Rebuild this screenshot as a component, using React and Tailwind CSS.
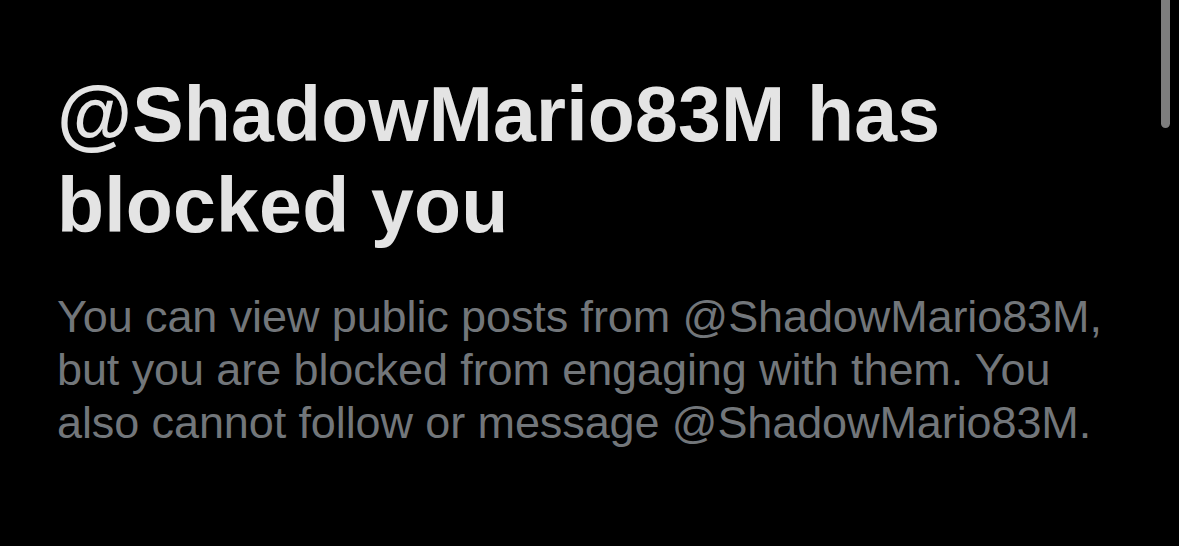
export default function App() {
  return (
    <main
      className="relative h-[546px] w-full overflow-hidden bg-black"
      style={{ fontFamily: '"Liberation Sans", Arial, sans-serif' }}
    >
      {/* scroll indicator */}
      <div className="absolute right-[9px] top-[-6px] h-[134px] w-[9px] rounded-full bg-[#7d7d7d]" />

      <div className="flex flex-col whitespace-nowrap pl-[57px] pt-[69px]">
        <h1 className="text-[77px] font-bold leading-[91px] tracking-[0.2px] text-[#e4e4e4]">
          @ShadowMario83M has
          <br />
          blocked you
        </h1>
        <p className="mt-[39px] text-[45px] leading-[53px] tracking-[-0.1px] text-[#72767a]">
          You can view public posts from @ShadowMario83M,
          <br />
          but you are blocked from engaging with them. You
          <br />
          also cannot follow or message @ShadowMario83M.
        </p>
      </div>
    </main>
  );
}
